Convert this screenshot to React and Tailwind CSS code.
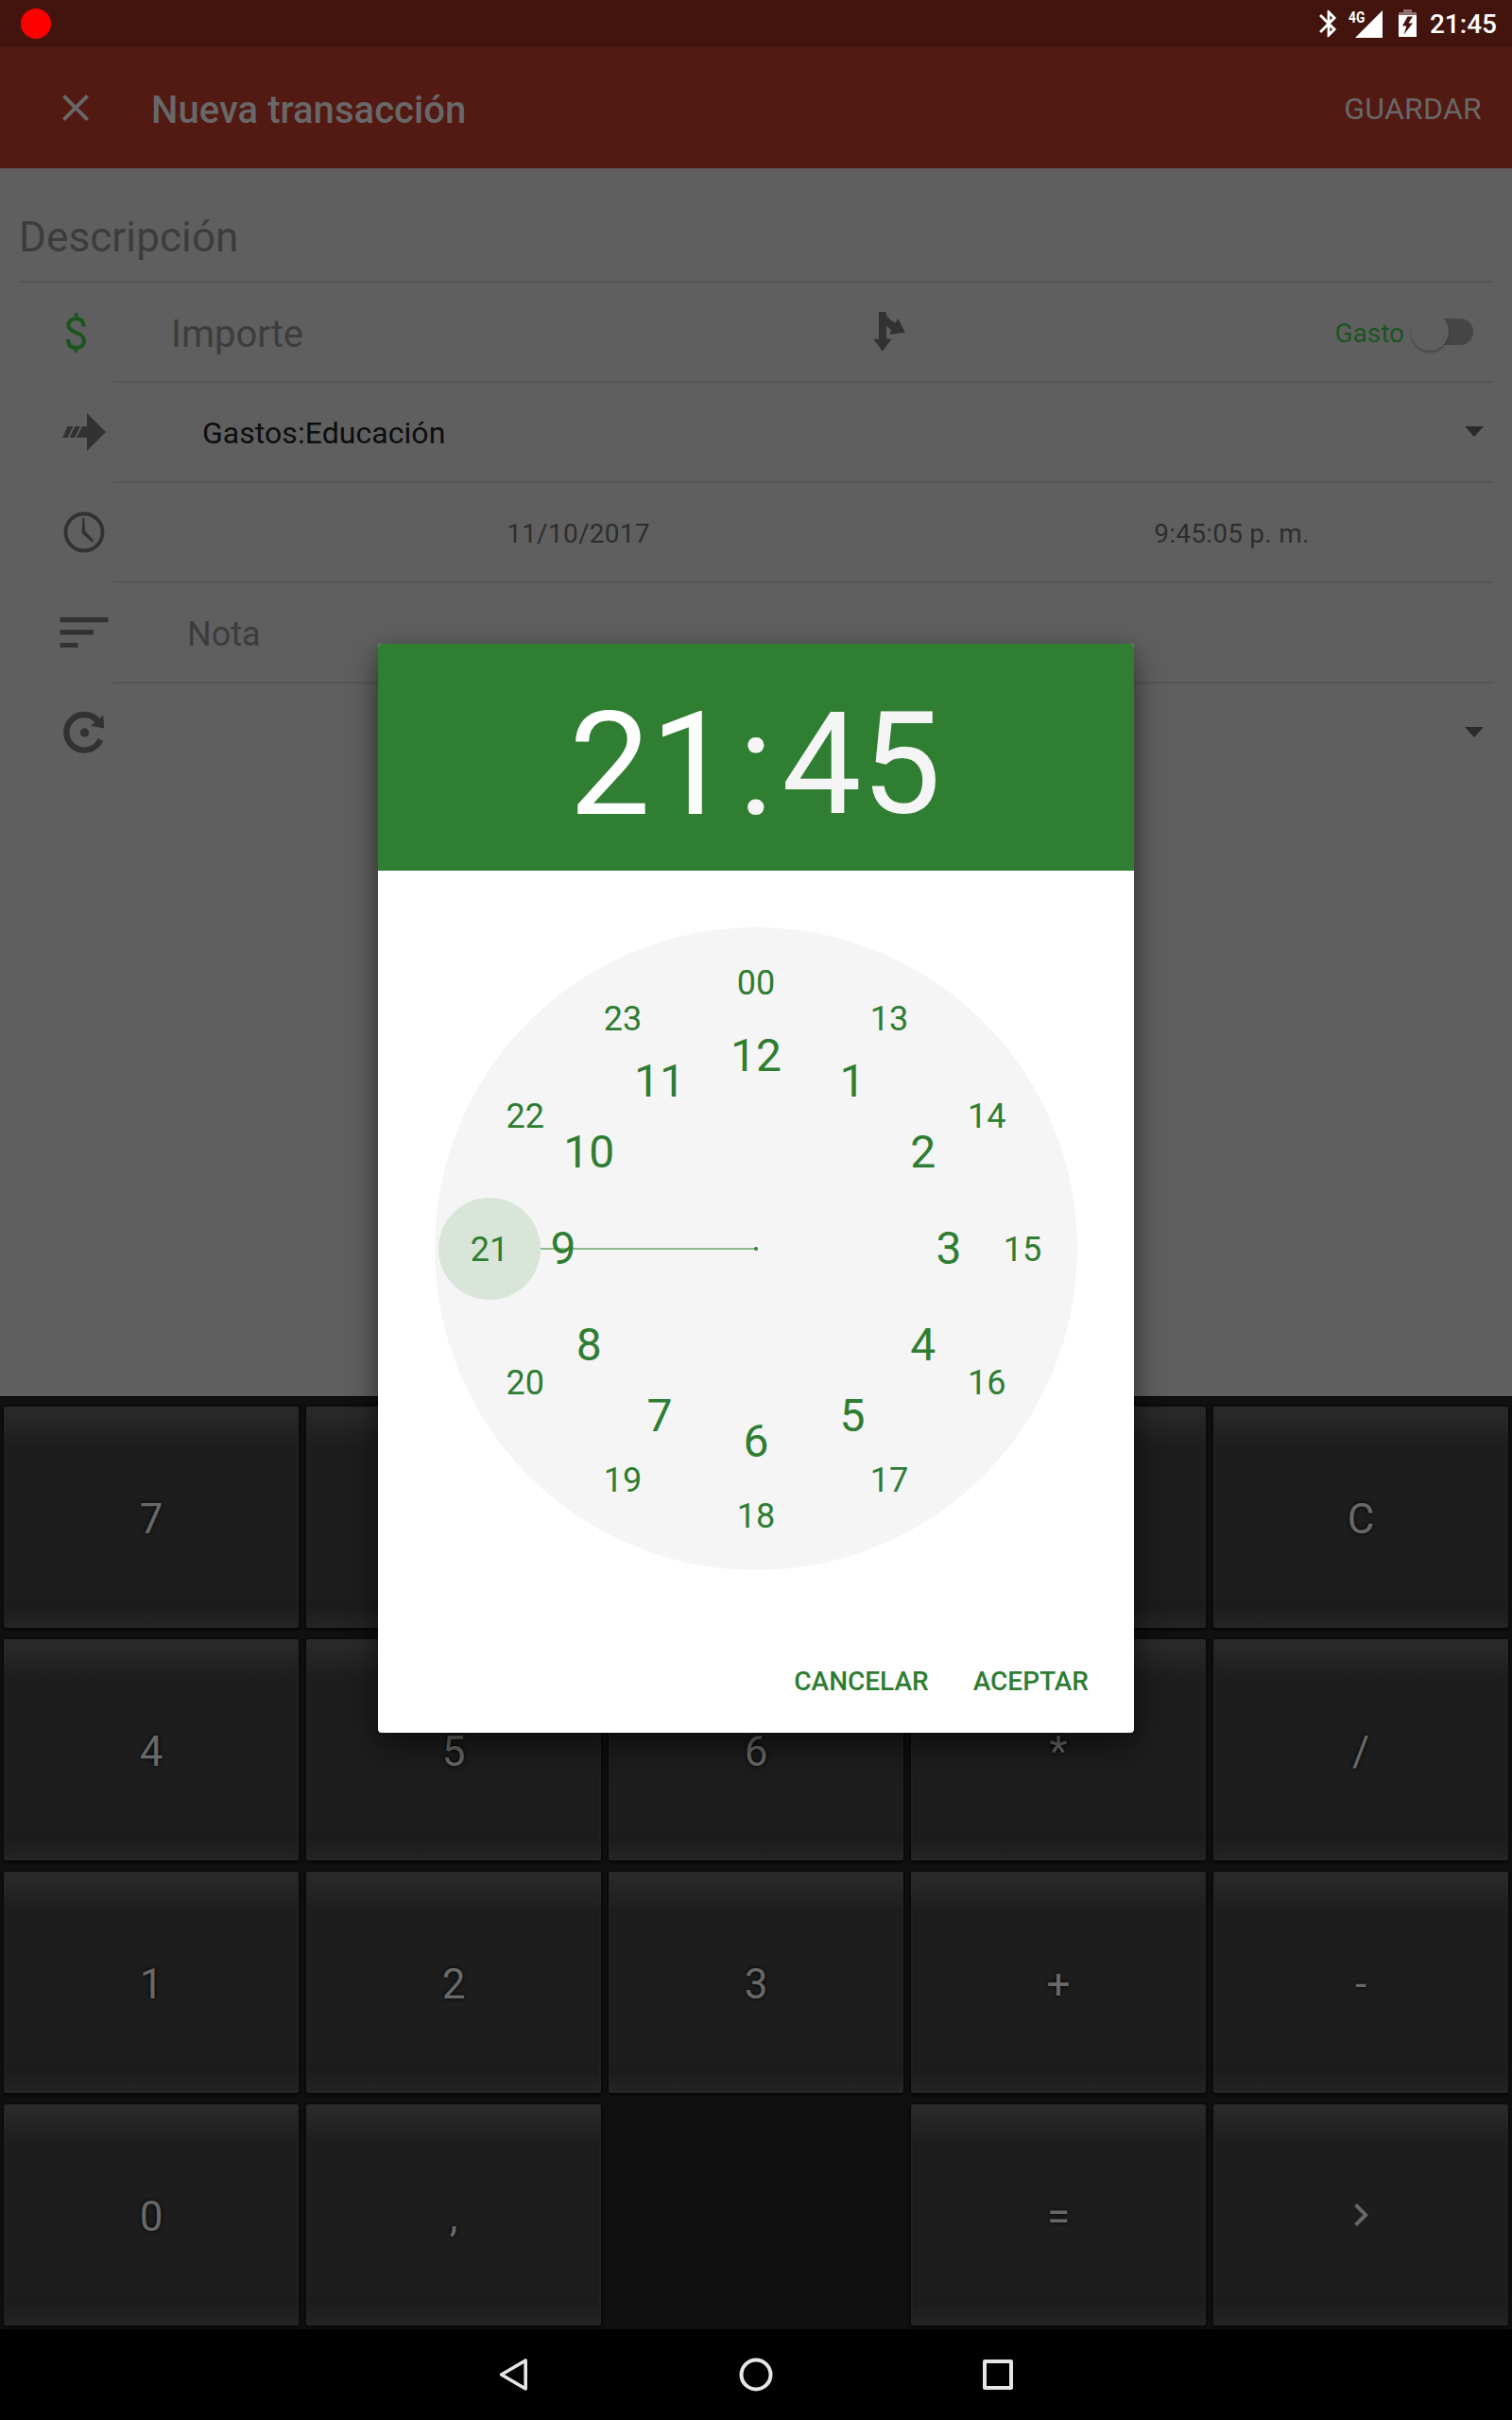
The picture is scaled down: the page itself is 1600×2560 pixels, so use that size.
import React from "react";

function StatusBar() {
  return (
    <div className="flex h-[50px] items-start bg-[#43130e] text-white">
      <div className="mt-[9px] ml-[22px] size-8 rounded-full bg-[#ff0000]" />
      <div className="ml-auto flex items-start">
        <svg className="mt-2 size-[34px]" viewBox="0 0 24 24" fill="currentColor">
          <path d="M17.71 7.71L12 2h-1v7.59L6.41 5 5 6.41 10.59 12 5 17.59 6.41 19 11 14.41V22h1l5.71-5.71-4.3-4.29 4.3-4.29zM13 5.83l1.88 1.88L13 9.59V5.83zm1.88 10.46L13 18.17v-3.76l1.88 1.88z" />
        </svg>
        <div className="mt-[11px] ml-[4px] flex h-[29px] w-[37px] items-start">
          <span className="w-[17px] origin-left scale-x-[0.86] pt-px text-[16px] leading-[14px] font-bold">4G</span>
          <svg className="-ml-[10px] h-[29px] w-[29px] shrink-0" viewBox="0 0 29 29" fill="currentColor">
            <path d="M29 0V29H0Z" />
          </svg>
        </div>
        <svg className="mt-[10px] ml-[16px] h-[29px] w-[19px]" viewBox="0 0 19 29">
          <path d="M5 0h9v3h5v3H0V3h5z" fill="#8d6f6c" />
          <path d="M0 6h19v23H0z" fill="white" />
          <path d="M9.5 7.5L4 17.5h4.400L5.500 26.500 15 14.500h-4.600L15 7.500z" fill="#43130e" />
        </svg>
        <span className="mt-[12px] mr-[16px] ml-[14px] text-[28px] leading-[28px] font-medium">21:45</span>
      </div>
    </div>
  );
}

function AppBar() {
  return (
    <div className="flex h-32 items-center bg-[#531913] pr-8 pl-14 text-[#686868]">
      <svg className="size-12" viewBox="0 0 24 24" fill="currentColor">
        <path d="M19 6.41L17.59 5 12 10.59 6.41 5 5 6.41 10.59 12 5 17.59 6.41 19 12 13.41 17.59 19 19 17.59 13.41 12z" />
      </svg>
      <h1 className="ml-14 pt-[6px] text-[40px] leading-none font-medium tracking-[0.05px]">Nueva transacción</h1>
      <span className="ml-auto pt-0.5 text-[32px] leading-none tracking-[0.25px]">GUARDAR</span>
    </div>
  );
}

function Row({ icon, last, children }) {
  return (
    <div className="flex h-[106px]">
      <div className="flex w-[120px] shrink-0 items-start text-[#323232]">{icon}</div>
      <div className={last ? "mr-5 flex grow items-center" : "mr-5 flex grow items-center border-b-2 border-[#565656]"}>
        {children}
      </div>
    </div>
  );
}

function Caret() {
  return (
    <svg className="mr-2.5 mb-0.5 ml-auto h-[11px] w-5" viewBox="0 0 20 11" fill="#2a2a2a">
      <path d="M0 0h20L10 11z" />
    </svg>
  );
}

function DollarIcon() {
  return (
    <svg className="h-[104px] w-[120px]" viewBox="0 299 120 104" fill="none" stroke="#1b5420" strokeWidth="4.200">
      <path d="M88.500 345.500c0-6-3.200-8.500-8-8.500c-5 0-8 3-8 7.300c0 4 2.800 5.800 8.200 7.700c5.800 2 8.200 4 8.200 8.600c0 4.600-3.200 7.400-8.400 7.400c-5.500 0-8.300-3.500-8.300-9.200" />
      <path d="M80.700 331v6M80.300 367v5.700" strokeWidth="3.600" />
    </svg>
  );
}

function TransferIcon() {
  return (
    <svg className="h-[104px] w-[120px]" viewBox="0 405 120 104" fill="currentColor">
      <path d="M92 437l20 20-20 20v-14H81l6-12h5zM73.500 463l6-12h5.500l-6 12zM66 463l5.500-12h6l-6 12z" />
    </svg>
  );
}

function ClockIcon() {
  return (
    <svg className="h-[104px] w-[120px]" viewBox="0 511 120 104" fill="none" stroke="currentColor">
      <circle cx="89" cy="563" r="19.500" strokeWidth="3.800" />
      <path d="M87.500 548h1.600l.9 13.800 9 9.700-1.300 2.300-11-9.800z" fill="currentColor" strokeWidth=".3" />
    </svg>
  );
}

function NoteIcon() {
  return (
    <svg className="h-[104px] w-[120px]" viewBox="0 617 120 104" fill="currentColor">
      <path d="M63.500 653h51v5.200h-51zM63.500 666.300H99v5.300H63.500zM63.500 680h19v5h-19z" />
    </svg>
  );
}

function RepeatIcon() {
  return (
    <svg className="h-[104px] w-[120px]" viewBox="0 723 120 104" fill="currentColor">
      <path d="M106.300 782.500A18.800 18.800 0 1 1 103 762" fill="none" stroke="currentColor" strokeWidth="6.400" />
      <path d="M109.300 756.200l.8 14.200-14-2.600z" />
      <circle cx="89.500" cy="775" r="4.600" />
    </svg>
  );
}

function Form() {
  return (
    <div className="h-[1299px] bg-[#5f5f5f]">
      <div className="mx-5 flex h-[121px] items-center border-b-2 border-[#565656] pt-[26px] text-[44px] leading-none tracking-[0.1px] text-[#3c3c3c]">
        Descripción
      </div>
      <Row icon={<DollarIcon />}>
        <span className="ml-[61px] w-[738px] pt-[6px] text-[40px] leading-none text-[#3c3c3c]">Importe</span>
        <svg className="-mt-px h-[42px] w-[42px]" viewBox="919 330 42 42" fill="#323232">
          <path d="M930 330h7.500l.5 3.800q3.500 5 9.300 8l2.900-4.800 7.800 14.700-16.500 2 1.700-5.200q-3.200-1.200-5.200-4v14h5.600l-9.700 13.200-9.700-13.200H930z" />
        </svg>
        <span className="ml-auto pt-1 text-[28px] leading-none text-[#1b5420]">Gasto</span>
        <div className="mr-[21px] ml-[7px] flex h-7 w-[66px] items-center rounded-full">
          <div className="z-10 size-10 shrink-0 rounded-full bg-[#5f5f5f] shadow-[0_2px_2px_rgba(0,0,0,0.25)]" />
          <div className="-ml-5 h-7 grow rounded-r-full bg-[#454545]" />
        </div>
      </Row>
      <Row icon={<TransferIcon />}>
        <span className="ml-[94px] pt-0.5 text-[32px] leading-none tracking-[0.05px] text-[#0d0d0d]">Gastos:Educación</span>
        <Caret />
      </Row>
      <Row icon={<ClockIcon />}>
        <div className="flex grow pt-1 pl-[77px] text-center text-[28px] leading-none tracking-[0.25px] text-[#2d2d2d]">
          <span className="grow-3 basis-0">11/10/2017</span>
          <span className="grow-2 basis-0">9:45:05 p. m.</span>
        </div>
      </Row>
      <Row icon={<NoteIcon />}>
        <span className="ml-[78px] pt-[3px] text-[36px] leading-none text-[#3c3c3c]">Nota</span>
      </Row>
      <Row icon={<RepeatIcon />} last>
        <div className="mb-0.5 flex grow">
          <Caret />
        </div>
      </Row>
    </div>
  );
}

// "" is a key without a caption, null leaves the cell empty.
const keys = ["7", "", "", "", "C", "4", "5", "6", "*", "/", "1", "2", "3", "+", "-", "0", ",", null, "=", "next"];

function Key({ label }) {
  if (label === null) return <div />;
  return (
    <div className="mx-1 mt-2 mb-1 flex items-center justify-center rounded-[3px] bg-[linear-gradient(180deg,#2b2b2b_0,#1d1d1d_42px,#1d1d1d_204px,#1a1a1a_206px,#242424_234px)] text-[44px] leading-none text-[#686868] shadow-[0_1px_3px_1px_#060606,inset_0_0_4px_#2a2a2a] [text-shadow:0_0_4px_black]">
      {label === "next" ? (
        <svg className="size-12" viewBox="0 0 24 24" fill="currentColor">
          <path d="M10 6L8.590 7.410 13.170 12l-4.580 4.590L10 18l6-6z" />
        </svg>
      ) : (
        <span className="pt-1">{label}</span>
      )}
    </div>
  );
}

function Keypad() {
  return (
    <div className="border-t border-[#000] bg-[#101010] pt-0.5">
      <div className="grid auto-rows-[246px] grid-cols-5">
        {keys.map((k, i) => (
          <Key key={i} label={k} />
        ))}
      </div>
    </div>
  );
}

function NavBar() {
  return (
    <div className="flex h-24 items-center justify-center gap-52 bg-black text-[#e6e6e6]">
      <svg className="size-12" viewBox="0 0 48 48" fill="none" stroke="currentColor" strokeWidth="4" strokeLinejoin="round">
        <path d="M38.200 7.300v33.400L9.800 24z" transform="translate(1.800 2.400) scale(.9)" />
      </svg>
      <svg className="size-12" viewBox="0 0 48 48" fill="none" stroke="currentColor" strokeWidth="4">
        <circle cx="24" cy="24" r="15.500" />
      </svg>
      <svg className="size-12" viewBox="0 0 48 48" fill="none" stroke="currentColor" strokeWidth="4" strokeLinejoin="round">
        <path d="M10 10h28v28H10z" />
      </svg>
    </div>
  );
}

const inner = ["12", "1", "2", "3", "4", "5", "6", "7", "8", "9", "10", "11"];
const outer = ["00", "13", "14", "15", "16", "17", "18", "19", "20", "21", "22", "23"];

function Hours({ labels, radius, className }) {
  return labels.map((label, i) => {
    const a = (i * Math.PI) / 6;
    return (
      <span
        key={label}
        className={className}
        style={{ left: 340 + radius * Math.sin(a), top: 340 - radius * Math.cos(a) }}
      >
        {label}
      </span>
    );
  });
}

function TimePicker() {
  return (
    <div className="absolute top-[681px] left-[400px] flex h-[1152px] w-[800px] flex-col overflow-hidden rounded bg-white text-[#2e7d32] shadow-[0_16px_34px_rgba(0,0,0,0.46),0_2px_16px_rgba(0,0,0,0.14)]">
      <div className="flex h-60 items-center justify-center bg-[#2f7e32] pt-[15px] pr-0.5 leading-none text-[#f5f5f5]">
        <span className="text-[153px] text-white">21</span>
        <span className="mr-[9px] ml-[7px] text-[153px]">:</span>
        <span className="text-[150px]">45</span>
      </div>
      <div className="relative mx-auto mt-[60px] size-[680px] rounded-full bg-[#f5f5f5]">
        <div className="absolute top-[339px] left-[112px] h-0.5 w-[228px] bg-[#8db98f]" />
        <div className="absolute top-[338px] left-[338px] size-1 rounded-full bg-[#2e7d32]" />
        <div className="absolute top-[286px] left-1 size-[108px] rounded-full bg-[#d9e5d9]" />
        <Hours labels={inner} radius={204} className="absolute -translate-1/2 pb-px text-[48px] leading-none" />
        <Hours labels={outer} radius={282} className="absolute -translate-1/2 pt-px text-[36px] leading-none" />
      </div>
      <div className="mt-[104px] mr-[47px] flex justify-end gap-[47px] pr-px text-[28px] leading-none font-medium">
        <span>CANCELAR</span>
        <span>ACEPTAR</span>
      </div>
    </div>
  );
}

export default function App() {
  return (
    <div className="relative h-[2560px] w-[1600px] overflow-hidden bg-black font-['Roboto',sans-serif]">
      <StatusBar />
      <AppBar />
      <Form />
      <Keypad />
      <NavBar />
      <TimePicker />
    </div>
  );
}
